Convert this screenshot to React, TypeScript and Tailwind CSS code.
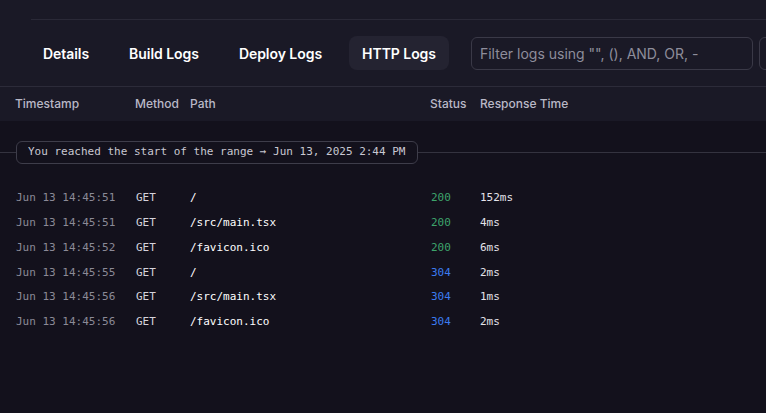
import React from 'react';

type LogRow = { time: string; method: string; path: string; status: number; ms: string };

const rows: LogRow[] = [
  { time: 'Jun 13 14:45:51', method: 'GET', path: '/', status: 200, ms: '152ms' },
  { time: 'Jun 13 14:45:51', method: 'GET', path: '/src/main.tsx', status: 200, ms: '4ms' },
  { time: 'Jun 13 14:45:52', method: 'GET', path: '/favicon.ico', status: 200, ms: '6ms' },
  { time: 'Jun 13 14:45:55', method: 'GET', path: '/', status: 304, ms: '2ms' },
  { time: 'Jun 13 14:45:56', method: 'GET', path: '/src/main.tsx', status: 304, ms: '1ms' },
  { time: 'Jun 13 14:45:56', method: 'GET', path: '/favicon.ico', status: 304, ms: '2ms' },
];

const tabs = ['Details', 'Build Logs', 'Deploy Logs', 'HTTP Logs'];

const App: React.FC = () => {
  return (
    <div className="w-full h-[413px] overflow-hidden bg-[#13111c] font-['Inter',sans-serif]">
      {/* top bar */}
      <div className="bg-[#1a1926]">
        <div className="pt-[19px] pl-[31px]">
          <div className="border-t border-[#2a2937]" />
        </div>
        <div className="flex items-center pl-[30px] pt-[16px] pb-[16px] overflow-hidden">
          <div className="flex items-center gap-[14px] shrink-0">
            {tabs.map((t) => (
              <div
                key={t}
                className={
                  'h-[34px] px-[13px] flex items-center shrink-0 whitespace-nowrap rounded-lg text-[14px] tracking-[-0.05px] font-semibold text-white ' +
                  (t === 'HTTP Logs' ? 'bg-[#242331]' : '')
                }
              >
                {t}
              </div>
            ))}
          </div>
          <div className="ml-[22px] w-[282px] h-[33px] shrink-0 whitespace-nowrap rounded-md border border-[#3a3947] flex items-center px-[8px] text-[14px] text-[#8e8d9b]">
            Filter logs using "", (), AND, OR, -
          </div>
          <div className="ml-[6px] w-[40px] h-[33px] shrink-0 rounded-md border border-[#3a3947]" />
        </div>
        <div className="border-t border-[#2c2b39]" />
        <div className="h-[34px] flex items-center text-[12px] font-medium text-[#b9b8c6]">
          <div className="w-[135px] pl-[15px] shrink-0">Timestamp</div>
          <div className="w-[55px] shrink-0">Method</div>
          <div className="w-[240px] shrink-0">Path</div>
          <div className="w-[50px] shrink-0">Status</div>
          <div>Response Time</div>
        </div>
      </div>

      {/* range marker */}
      <div className="relative mt-[20px] h-[23px] flex items-center">
        <div className="absolute left-0 right-0 top-[11px] border-t border-[#34333f]" />
        <div className="relative ml-[16px] h-[23px] px-[11px] flex items-center whitespace-nowrap rounded-md border border-[#3e3d4a] bg-[#13111c] font-['DejaVu_Sans_Mono',monospace] text-[11px] text-[#c9c8d2]">
          You reached the start of the range → Jun 13, 2025 2:44 PM
        </div>
      </div>

      {/* log rows */}
      <div className="mt-[22px] font-['DejaVu_Sans_Mono',monospace] text-[11px]">
        {rows.map((r, i) => (
          <div key={i} className="h-[24.8px] flex items-center whitespace-nowrap">
            <div className="w-[136px] pl-[16px] shrink-0 text-[#8b8a97]">{r.time}</div>
            <div className="w-[54px] shrink-0 text-[#d4d3dc]">{r.method}</div>
            <div className="w-[241px] shrink-0 text-white">{r.path}</div>
            <div className={'w-[49px] shrink-0 ' + (r.status === 200 ? 'text-[#3da46b]' : 'text-[#3b7cf0]')}>
              {r.status}
            </div>
            <div className="text-[#e4e3ea]">{r.ms}</div>
          </div>
        ))}
      </div>
    </div>
  );
};

export default App;
